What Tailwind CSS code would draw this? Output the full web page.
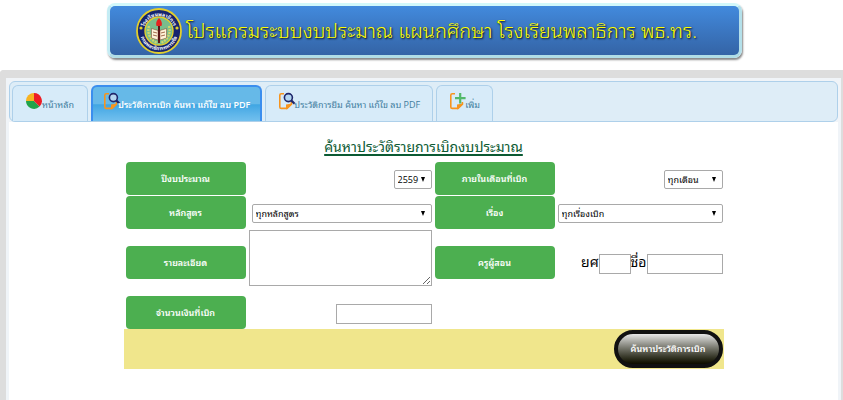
<!DOCTYPE html>
<html lang="th">
<head>
<meta charset="utf-8">
<meta name="viewport" content="width=device-width, initial-scale=1">
<title>โปรแกรมระบบงบประมาณ</title>
<script src="https://cdn.jsdelivr.net/npm/@tailwindcss/browser@4"></script>
</head>
<body class="flex min-h-screen flex-col bg-white font-['Open_Sans','Noto_Sans_Thai_Looped','Noto_Looped_Thai','Loma','Noto_Sans',sans-serif] text-black">

<svg class="hidden" aria-hidden="true">
  <symbol id="page" viewBox="0 0 18 18">
    <path d="M6 1.800H3.200Q1.800 1.800 1.800 3.200V15Q1.800 16.400 3.200 16.400H8.500L13.400 12V10" fill="none" stroke="#f7941e" stroke-width="1.600"/>
    <path d="M8 17.200V12.400L14.200 11.400V12.400L9.400 17.200Z" fill="#f7941e"/>
  </symbol>
  <symbol id="page-search" viewBox="0 0 18 18">
    <use href="#page"/>
    <circle cx="10.400" cy="5.600" r="4" fill="#b4d6f0" stroke="#20276b" stroke-width="1.600"/>
    <path d="M13.200 8.400 16.600 11.800" stroke="#20276b" stroke-width="2.200"/>
  </symbol>
  <symbol id="page-add" viewBox="0 0 18 18">
    <use href="#page"/>
    <path d="M11.200 1V11.400M6 6.200H16.600" stroke="#52b96a" stroke-width="2.200"/>
  </symbol>
</svg>

<header class="h-[70px] pt-[3px] pl-[6px]">
  <div class="mx-auto flex h-[55px] max-w-[635px] items-center rounded-lg border-[3px] border-t-[#d2f8fa] border-r-[#b4e0ea] border-b-[#b0dde6] border-l-[#c4ecf4] bg-linear-to-b from-[#428add] to-[#3464a6] pl-[26px] shadow-[1px_2px_2px_#888]">
    <svg class="size-[46px] shrink-0" viewBox="0 0 46 46" role="img" aria-label="โรงเรียนพลาธิการ">
      <defs>
        <path id="arc-top" d="M8 23A15 15 0 0 1 38 23"/>
        <path id="arc-bottom" d="M3.800 23A19.200 19.200 0 0 0 42.200 23"/>
      </defs>
      <circle cx="23" cy="23" r="22" fill="#16246f" stroke="#e3cf2c" stroke-width="1.800"/>
      <circle cx="23" cy="23" r="14" fill="#79bd8c" stroke="#e3cf2c" stroke-width="1.400"/>
      <text fill="#fff" font-size="5" font-weight="700"><textPath href="#arc-top" startOffset="50%" text-anchor="middle">โรงเรียนพลาธิการ</textPath></text>
      <text fill="#fff" font-size="5" font-weight="700"><textPath href="#arc-bottom" startOffset="50%" text-anchor="middle">กรมพลาธิการทหารเรือ</textPath></text>
      <circle cx="5" cy="20" r="1.600" fill="#e3cf2c"/><circle cx="41" cy="20" r="1.600" fill="#e3cf2c"/>
      <path d="M13 18Q10 29 21 35M33 18Q36 29 25 35" fill="none" stroke="#d3d66a" stroke-width="2.400" stroke-dasharray="2 1"/>
      <path d="M15.500 20.500 22 22.500V32L15.500 30ZM30.500 20.500 24 22.500V32L30.500 30Z" fill="#fff4d8" stroke="#7a3a20" stroke-width=".5"/>
      <path d="M17 24l4 1M17 27l4 1M25 25l4-1M25 28l4-1" stroke="#8b4a2a" stroke-width=".8"/>
      <path d="M22 18h2v17h-2z" fill="#5a1717"/>
      <path d="M23 10Q27 14 25.500 18H20.500Q19 14 23 10Z" fill="#e5231f"/>
    </svg>
    <h1 class="pl-[4px] text-[20px] leading-[30px] font-light whitespace-nowrap text-[#ffff00] [text-shadow:1px_1px_2px_#000]">โปรแกรมระบบงบประมาณ แผนกศึกษา โรงเรียนพลาธิการ พธ.ทร.</h1>
  </div>
</header>

<div class="flex flex-1 flex-col rounded-tl border-t-8 border-r-2 border-l-6 border-[#ddd] bg-[#f0f4f8] px-[3px] pt-[3px]">
  <nav class="flex h-[41px] items-end gap-[3px] rounded-md border border-[#aed0ea] bg-[#deedf7] px-[2px] text-[9px] leading-[14px] text-[#417d9e]">
    <a href="#" class="flex h-[36px] items-start rounded-t-md border border-b-0 border-[#aed0ea] bg-[#d7ebf9] px-[13px] pt-[7px]">
      <svg class="size-4 shrink-0" viewBox="0 0 16 16" aria-hidden="true"><path d="M8 8V0A8 8 0 0 0 0 8Z" fill="#f7b321"/><path d="M0 8A8 8 0 0 0 13.600 13.600L8 8Z" fill="#22a34a"/><path d="M8 8V0A8 8 0 0 1 13.600 13.600Z" fill="#ed1c24"/></svg>
      <span class="pt-[5px] whitespace-nowrap">หน้าหลัก</span>
    </a>
    <a href="#" class="flex h-[36px] items-start rounded-t-md border-2 border-b-0 border-[#3b8eee] bg-linear-to-b from-[#66b9e8] from-50% via-[#3fa6e3] via-52% to-[#72c0ee] px-[10px] pt-[5px] font-semibold text-white" aria-current="page">
      <svg class="-mr-[3px] size-[18px] shrink-0" aria-hidden="true"><use href="#page-search"/></svg>
      <span class="pt-[6px] whitespace-nowrap">ประวัติการเบิก ค้นหา แก้ไข ลบ PDF</span>
    </a>
    <a href="#" class="flex h-[36px] items-start rounded-t-md border border-b-0 border-[#aed0ea] bg-[#d7ebf9] px-[12px] pt-[6px]">
      <svg class="-mr-[2px] size-[18px] shrink-0" aria-hidden="true"><use href="#page-search"/></svg>
      <span class="pt-[6px] whitespace-nowrap">ประวัติการยืม ค้นหา แก้ไข ลบ PDF</span>
    </a>
    <a href="#" class="flex h-[36px] items-start rounded-t-md border border-b-0 border-[#aed0ea] bg-[#d7ebf9] px-[12px] pt-[6px]">
      <svg class="-mr-[2px] size-[18px] shrink-0" aria-hidden="true"><use href="#page-add"/></svg>
      <span class="pt-[6px] whitespace-nowrap">เพิ่ม</span>
    </a>
  </nav>

  <main class="flex-1 bg-white pt-[14px]">
    <form class="mx-auto max-w-[600px]">
      <h2 class="h-[26px] text-center text-[14px] leading-[22px] text-[#0b5a33] underline decoration-2 underline-offset-2">ค้นหาประวัติรายการเบิกงบประมาณ</h2>
      <div class="grid grid-cols-[120px_1fr_120px_165px] items-start gap-x-[3px] gap-y-px pr-px pl-[2px] text-[9px]">
        <label for="year" class="flex h-[33px] items-center justify-center rounded-sm bg-[#4caf50] font-semibold text-white">ปีงบประมาณ</label>
        <div class="relative mt-2 justify-self-end">
          <select id="year" class="block h-[19px] w-[38px] appearance-none rounded-xs border border-[#a9a9a9] bg-white pl-[3px]"><option>2559</option></select>
          <svg class="pointer-events-none absolute top-[7px] right-[7px] h-[5px] w-[4px]" viewBox="0 0 4 5" aria-hidden="true"><path d="M0 0H4L2 5Z"/></svg>
        </div>
        <label for="month" class="flex h-[33px] items-center justify-center rounded-sm bg-[#4caf50] font-semibold text-white">ภายในเดือนที่เบิก</label>
        <div class="relative mt-2 justify-self-end">
          <select id="month" class="block h-[19px] w-[59px] appearance-none rounded-xs border border-[#a9a9a9] bg-white pl-[3px]"><option>ทุกเดือน</option></select>
          <svg class="pointer-events-none absolute top-[7px] right-[7px] h-[5px] w-[4px]" viewBox="0 0 4 5" aria-hidden="true"><path d="M0 0H4L2 5Z"/></svg>
        </div>

        <label for="course" class="flex h-[33px] items-center justify-center rounded-sm bg-[#4caf50] font-semibold text-white">หลักสูตร</label>
        <div class="relative mt-2 ml-[3px]">
          <select id="course" class="block h-[19px] w-full appearance-none rounded-xs border border-[#a9a9a9] bg-white pl-[3px]"><option>ทุกหลักสูตร</option></select>
          <svg class="pointer-events-none absolute top-[7px] right-[7px] h-[5px] w-[4px]" viewBox="0 0 4 5" aria-hidden="true"><path d="M0 0H4L2 5Z"/></svg>
        </div>
        <label for="topic" class="flex h-[33px] items-center justify-center rounded-sm bg-[#4caf50] font-semibold text-white">เรื่อง</label>
        <div class="relative mt-2">
          <select id="topic" class="block h-[19px] w-full appearance-none rounded-xs border border-[#a9a9a9] bg-white pl-[3px]"><option>ทุกเรื่องเบิก</option></select>
          <svg class="pointer-events-none absolute top-[7px] right-[7px] h-[5px] w-[4px]" viewBox="0 0 4 5" aria-hidden="true"><path d="M0 0H4L2 5Z"/></svg>
        </div>

        <label for="detail" class="mt-4 flex h-[33px] items-center justify-center rounded-sm bg-[#4caf50] font-semibold text-white">รายละเอียด</label>
        <textarea id="detail" class="mb-[9px] block h-14 w-full border border-[#a9a9a9]"></textarea>
        <span class="mt-4 flex h-[33px] items-center justify-center rounded-sm bg-[#4caf50] font-semibold text-white">ครูผู้สอน</span>
        <div class="mt-6 flex items-center justify-end text-[14px] leading-[20px]">
          <label for="rank" class="-mt-1">ยศ</label>
          <input id="rank" type="text" class="h-5 w-8 border border-[#a9a9a9]">
          <label for="name" class="-mt-1">ชื่อ</label>
          <input id="name" type="text" class="h-5 w-[76px] border border-[#a9a9a9]">
        </div>

        <label for="amount" class="flex h-[33px] items-center justify-center rounded-sm bg-[#4caf50] font-semibold text-white">จำนวนเงินที่เบิก</label>
        <input id="amount" type="text" class="mt-2 h-5 w-24 justify-self-end border border-[#a9a9a9]">
      </div>
      <div class="flex h-10 items-center justify-end bg-[#f0e68c] pr-px">
        <button type="button" class="h-[38px] w-[109px] rounded-full border-4 border-[#111] bg-linear-to-b from-[#e8e8e8] to-[#0c0c00] text-[9px] font-semibold text-white">ค้นหาประวัติการเบิก</button>
      </div>
    </form>
  </main>
</div>
</body>
</html>
